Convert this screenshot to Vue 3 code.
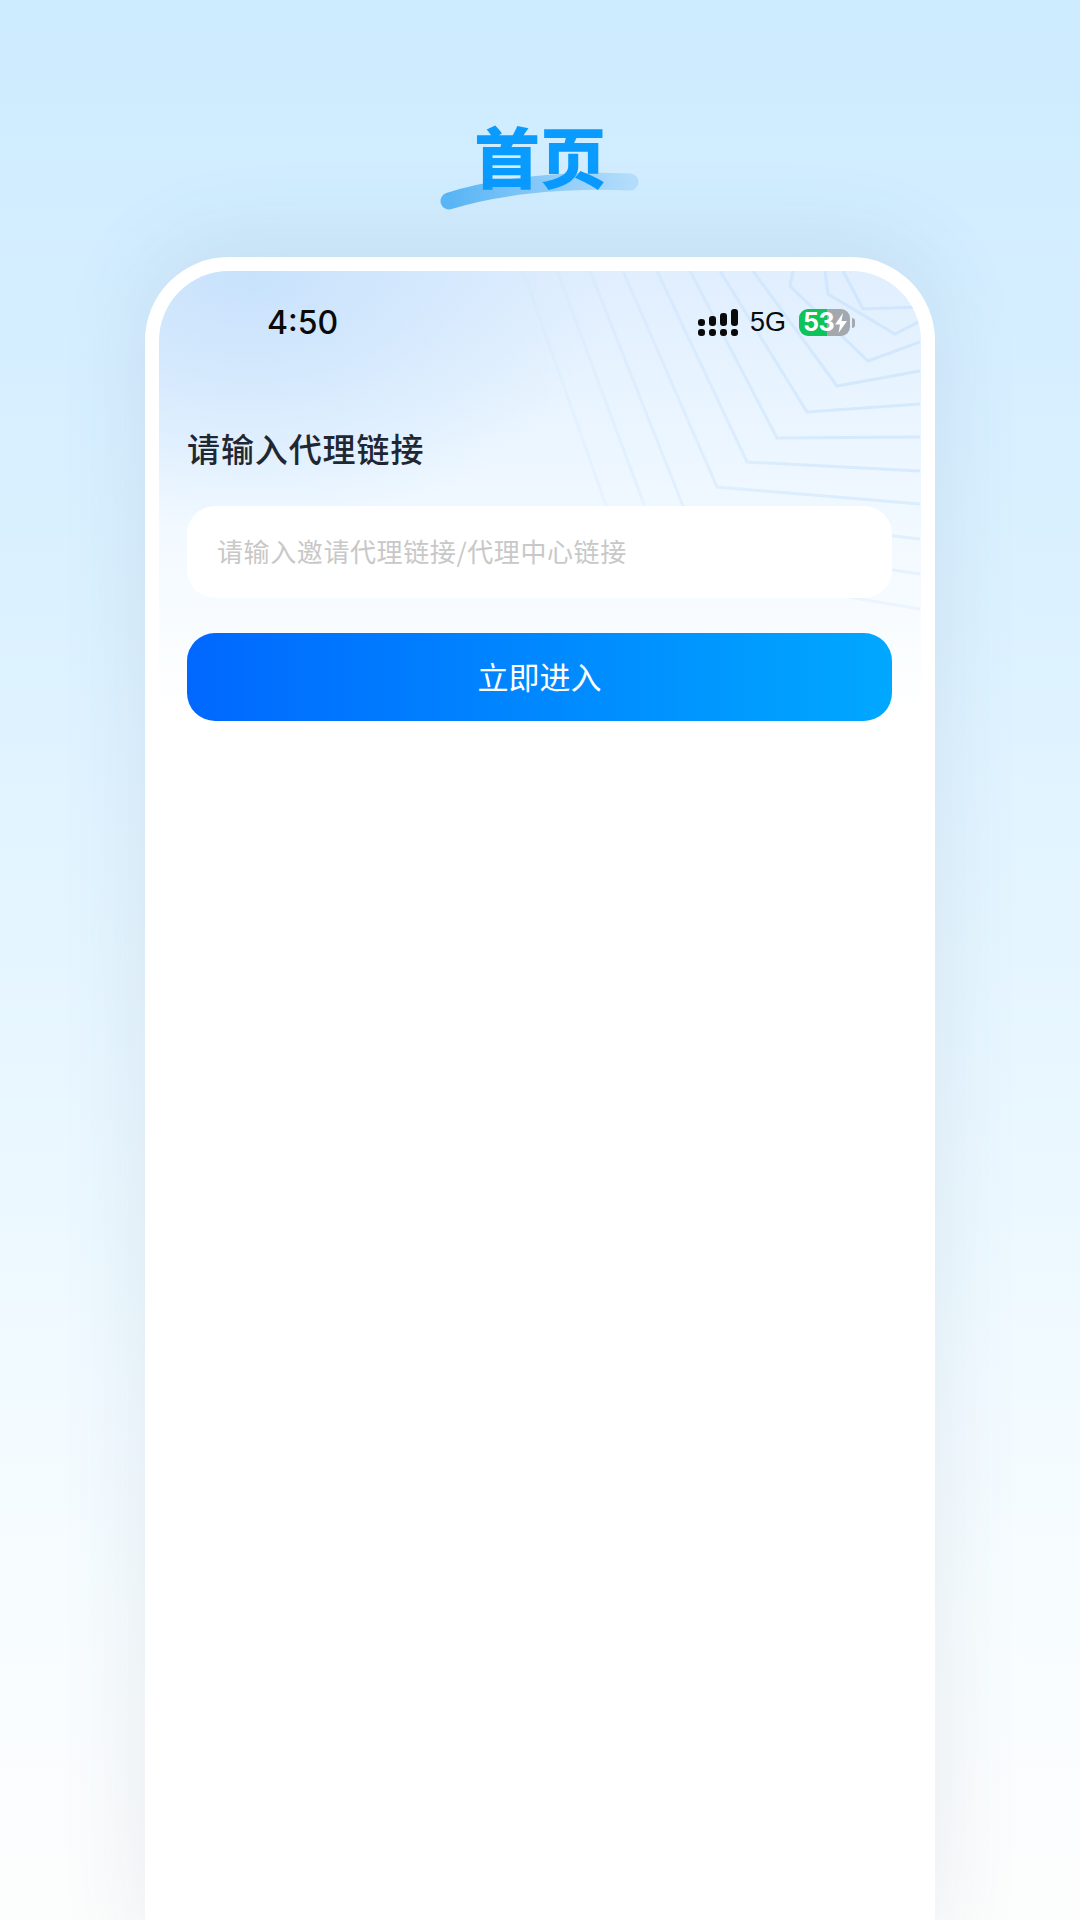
<script setup>
const lines = [
  '843,272 863,310 920,308',
  '825,272 828,295 895,335 920,322',
  '793,272 790,287 868,362 920,343',
  '753,272 837,387 920,372',
  '720,272 807,413 920,405',
  '690,272 777,439 920,438',
  '657,272 747,463 920,472',
  '623,272 717,488 920,505',
  '590,272 685,512 920,540',
  '557,272 655,535 920,575',
  '523,272 625,560 920,610'
]
const bars = [7, 10, 13, 17]
</script>

<template>
  <div class="page">
    <header class="head">
      <svg class="swoosh" viewBox="0 0 200 44" width="200" height="44">
        <defs>
          <linearGradient id="sw" x1="0" x2="1" y1="0" y2="0">
            <stop offset="0" stop-color="#5ab7f7" />
            <stop offset="0.55" stop-color="#8cccfa" />
            <stop offset="1" stop-color="#b4defc" />
          </linearGradient>
        </defs>
        <path d="M9 33 C 52 19, 120 11, 190 14" fill="none" stroke="url(#sw)" stroke-width="17" stroke-linecap="round" />
      </svg>
      <h1 class="title">首页</h1>
    </header>
    <section class="phone">
      <svg class="mesh" viewBox="159 272 761 460" width="761" height="460">
        <polyline v-for="(p, i) in lines" :key="i" :points="p" fill="none" stroke="#bcdcfb" stroke-width="3" />
      </svg>
      <div class="status">
        <span class="time">4:50</span>
        <div class="indicators">
          <div class="signal">
            <div v-for="(h, i) in bars" :key="i" class="col">
              <i class="bar" :style="{ height: h + 'px' }"></i>
              <i class="dot"></i>
            </div>
          </div>
          <span class="net">5G</span>
          <div class="battery">
            <div class="cell">
              <span class="pct">53</span>
              <svg class="bolt" viewBox="0 0 12 20" width="12" height="20">
                <path d="M8 0 L0 11.5 H5 L3.5 20 L12 8 H6.5 Z" fill="#fff" />
              </svg>
            </div>
            <i class="tip"></i>
          </div>
        </div>
      </div>
      <div class="form">
        <h2 class="label">请输入代理链接</h2>
        <div class="field">请输入邀请代理链接/代理中心链接</div>
        <button class="go">立即进入</button>
      </div>
    </section>
  </div>
</template>

<style>
body { margin: 0; }
</style>

<style scoped>
.page {
  width: 1080px;
  height: 1920px;
  overflow: hidden;
  box-sizing: border-box;
  padding-top: 112px;
  background: linear-gradient(180deg, #cdebff 0, #d9f0ff 500px, #e9f7ff 1100px, #f6fcff 1550px, #fdfdfd 1920px);
  font-family: "Noto Sans CJK SC", "Noto Sans", sans-serif;
}
.head {
  position: relative;
  height: 145px;
  display: flex;
  justify-content: center;
}
.swoosh {
  position: absolute;
  left: 440px;
  top: 56px;
}
.title {
  position: relative;
  margin: 0;
  font-size: 66px;
  line-height: 84px;
  font-weight: 900;
  letter-spacing: 0;
  color: #0a9bff;
}
.phone {
  position: relative;
  overflow: hidden;
  box-sizing: border-box;
  width: 790px;
  height: 1700px;
  margin: 0 auto;
  border: 14px solid #fff;
  border-bottom: 0;
  border-radius: 84px 84px 0 0;
  box-shadow: 0 -14px 90px rgba(60, 90, 115, 0.11);
  background:
    radial-gradient(ellipse 360px 260px at 12% 0, #c8e2fc 0, rgba(200, 226, 252, 0) 100%),
    linear-gradient(180deg, #e0eefe 0, #eaf5ff 150px, #f4faff 290px, #fff 450px);
}
.mesh {
  position: absolute;
  left: 0;
  top: 0;
  opacity: 0.45;
  -webkit-mask-image: linear-gradient(180deg, #000 0, #000 200px, transparent 450px), linear-gradient(90deg, transparent 42%, rgba(0, 0, 0, 0.55) 65%, #000 90%);
  mask-image: linear-gradient(180deg, #000 0, #000 200px, transparent 450px), linear-gradient(90deg, transparent 42%, rgba(0, 0, 0, 0.55) 65%, #000 90%);
  -webkit-mask-composite: source-in;
  mask-composite: intersect;
}
.status {
  position: relative;
  display: flex;
  justify-content: space-between;
  align-items: center;
  height: 27px;
  padding: 38px 66px 0 108px;
}
.time {
  font-family: Inter, sans-serif;
  font-size: 32px;
  font-weight: 500;
  letter-spacing: 0;
  color: #0a0a0a;
}
.indicators {
  display: flex;
  align-items: center;
}
.signal {
  display: flex;
  align-items: flex-end;
  gap: 4px;
  margin-top: -1px;
}
.col {
  display: flex;
  flex-direction: column;
  gap: 3px;
  width: 7px;
}
.bar, .dot {
  display: block;
  background: #0a0a0a;
  border-radius: 3px;
}
.dot { height: 7px; border-radius: 3px; }
.net {
  margin-left: 12px;
  font-family: "Liberation Sans", sans-serif;
  font-size: 27px;
  line-height: 27px;
  color: #0a0a0a;
}
.battery {
  display: flex;
  align-items: center;
  margin-left: 13px;
}
.cell {
  box-sizing: border-box;
  display: flex;
  align-items: center;
  width: 51px;
  height: 27px;
  padding-left: 4px;
  border-radius: 9px;
  background: linear-gradient(90deg, #0dc35a 0, #0dc35a 28px, #a3a8af 28px);
}
.pct {
  font-family: Inter, sans-serif;
  font-size: 25px;
  line-height: 27px;
  font-weight: 700;
  letter-spacing: -0.5px;
  color: #fff;
}
.bolt { margin-left: 1px; }
.tip {
  display: block;
  width: 3px;
  height: 10px;
  margin-left: 2px;
  border-radius: 0 3px 3px 0;
  background: #a3a8af;
}
.form {
  position: relative;
  padding: 88px 29px 0 28px;
}
.label {
  margin: 0;
  font-size: 33px;
  line-height: 48px;
  font-weight: 500;
  letter-spacing: 0.9px;
  color: #1f2832;
}
.field {
  box-sizing: border-box;
  height: 92px;
  margin-top: 34px;
  padding-left: 30px;
  border-radius: 28px;
  background: #fff;
  font-size: 26px;
  line-height: 90px;
  letter-spacing: 0.6px;
  color: #c8c8c8;
}
.go {
  display: block;
  width: 100%;
  height: 88px;
  margin-top: 35px;
  padding: 0 0 4px;
  border: 0;
  border-radius: 28px;
  background: linear-gradient(90deg, #0068ff 0, #00a8ff 100%);
  font-family: inherit;
  font-size: 31px;
  letter-spacing: 0;
  color: #fff;
}
</style>
